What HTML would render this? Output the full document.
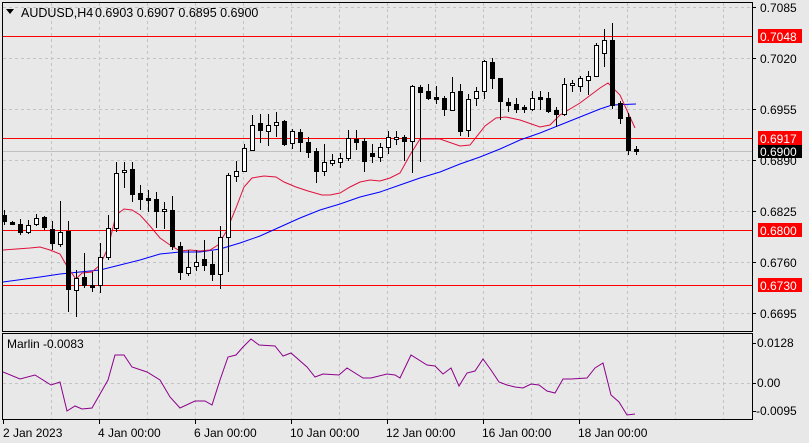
<!DOCTYPE html>
<html><head><meta charset="utf-8"><style>
html,body{margin:0;padding:0;background:#e8e8e8;width:809px;height:443px;overflow:hidden}
svg{display:block;font-family:"Liberation Sans",Tahoma,sans-serif}
</style></head><body>
<svg width="809" height="443" viewBox="0 0 809 443" xmlns="http://www.w3.org/2000/svg">
<rect width="809" height="443" fill="#e8e8e8"/>
<defs><clipPath id="m"><rect x="3" y="3" width="749" height="328"/></clipPath>
<clipPath id="i"><rect x="3" y="334" width="749" height="85"/></clipPath></defs>
<g stroke="#c4c4c4" stroke-dasharray="3,3" stroke-width="1">
<path d="M51.5 3V331M99.5 3V331M147.5 3V331M195.5 3V331M243.5 3V331M291.5 3V331M339.5 3V331M387.5 3V331M435.5 3V331M483.5 3V331M531.5 3V331M579.5 3V331M627.5 3V331M675.5 3V331M723.5 3V331"/>
<path d="M3 7.5H752M3 58.5H752M3 109.5H752M3 160.5H752M3 211.5H752M3 262.5H752M3 313.5H752"/>
<path d="M51.5 334V419M99.5 334V419M147.5 334V419M195.5 334V419M243.5 334V419M291.5 334V419M339.5 334V419M387.5 334V419M435.5 334V419M483.5 334V419M531.5 334V419M579.5 334V419M627.5 334V419M675.5 334V419M723.5 334V419"/>
<path d="M3 383.5H752"/>
</g>
<g clip-path="url(#m)">
<path d="M3 151.5H752" stroke="#c0c0c0"/>
<g stroke="#ff0000" stroke-width="1"><path d="M3 36.5H752M3 138.5H752M3 230.5H752M3 285.5H752"/></g>
<polyline fill="none" stroke="#0000ff" points="3,282 40,277 60,274 80,272 100,270 120,265 140,260 160,254 180,252 200,252 220,249 240,243 260,236 280,227 300,218 320,210 340,204 360,197 380,192 400,185 420,178 440,172 460,164 480,157 500,149 520,140 540,133 560,125 580,117 600,109 612,105 636,104"/>
<polyline fill="none" stroke="#e0103c" points="3,250 30,248 40,247 50,250 60,254 68,268 76,279 82,273 92,272 100,265 108,248 116,215 124,209 132,210 140,215 150,226 160,238 170,245 180,251 190,250 200,251 210,250 218,245 226,232 236,208 244,187 252,178 264,176 276,177 284,182 296,187 308,191 322,195 330,195 340,193 350,187 360,182 370,180 380,181 390,178 400,173 410,155 420,139 440,139 460,146 470,145 485,126 496,118 506,117 520,120 540,127 550,125 560,115 580,103 600,88 608,83 620,95 635,128"/>
<path stroke="#000" fill="none" d="M4.5 210V225M12.5 221V225M20.5 219V235M28.5 220V234M36.5 214V226M44.5 216V230M52.5 221V250M60.5 201V247M68.5 221V312M76.5 270V317M84.5 253V288M92.5 272V292M100.5 243V293M108.5 215V260M116.5 162V232M124.5 162V188M132.5 162V202M140.5 185V210M148.5 190V212M156.5 192V228M164.5 202V229M172.5 196V250M180.5 242V280M188.5 250V276M196.5 250V271M204.5 240V271M212.5 251V281M220.5 226V289M228.5 173V272M236.5 161V182M244.5 144V171M252.5 115V151M260.5 114V143M268.5 114V146M276.5 112V137M284.5 120V146M292.5 129V149M300.5 129V152M308.5 137V158M316.5 148V183M324.5 144V176M332.5 154V166M340.5 153V168M348.5 130V161M356.5 130V150M364.5 138V172M372.5 144V163M380.5 143V162M388.5 131V154M396.5 131V145M404.5 135V161M412.5 85V173M420.5 85V162M428.5 84V100M436.5 86V104M444.5 96V116M452.5 77V111M460.5 84V136M468.5 94V137M476.5 87V106M484.5 60V99M492.5 58V89M500.5 78V120M508.5 98V112M516.5 98V113M524.5 105V113M532.5 91V111M540.5 91V110M548.5 92V113M556.5 107V127M564.5 78V116M572.5 80V92M580.5 76V92M588.5 71V95M596.5 43V77M604.5 29V67M612.5 23V109M620.5 101V124M628.5 113V155M636.5 146V155"/>
<g fill="#000" stroke="#000">
<rect x="2.5" y="215.5" width="4" height="6"/><rect x="10.5" y="222.5" width="4" height="2"/><rect x="18.5" y="224.5" width="4" height="8"/><rect x="42.5" y="217.5" width="4" height="10"/><rect x="50.5" y="229.5" width="4" height="14"/><rect x="66.5" y="231.5" width="4" height="58"/><rect x="82.5" y="277.5" width="4" height="8"/><rect x="90.5" y="285.5" width="4" height="2"/><rect x="130.5" y="169.5" width="4" height="25"/><rect x="138.5" y="193.5" width="4" height="6"/><rect x="146.5" y="198.5" width="4" height="2"/><rect x="154.5" y="199.5" width="4" height="12"/><rect x="170.5" y="210.5" width="4" height="36"/><rect x="178.5" y="246.5" width="4" height="26"/><rect x="202.5" y="259.5" width="4" height="6"/><rect x="210.5" y="264.5" width="4" height="10"/><rect x="258.5" y="123.5" width="4" height="7"/><rect x="282.5" y="121.5" width="4" height="23"/><rect x="298.5" y="132.5" width="4" height="10"/><rect x="306.5" y="142.5" width="4" height="10"/><rect x="314.5" y="151.5" width="4" height="20"/><rect x="354.5" y="139.5" width="4" height="3"/><rect x="362.5" y="141.5" width="4" height="20"/><rect x="370.5" y="153.5" width="4" height="3"/><rect x="402.5" y="137.5" width="4" height="4"/><rect x="418.5" y="87.5" width="4" height="5"/><rect x="426.5" y="91.5" width="4" height="7"/><rect x="434.5" y="97.5" width="4" height="2"/><rect x="442.5" y="98.5" width="4" height="11"/><rect x="458.5" y="91.5" width="4" height="40"/><rect x="490.5" y="62.5" width="4" height="16"/><rect x="498.5" y="78.5" width="4" height="23"/><rect x="506.5" y="102.5" width="4" height="3"/><rect x="514.5" y="104.5" width="4" height="5"/><rect x="522.5" y="107.5" width="4" height="2"/><rect x="538.5" y="97.5" width="4" height="2"/><rect x="546.5" y="98.5" width="4" height="13"/><rect x="554.5" y="110.5" width="4" height="4"/><rect x="610.5" y="40.5" width="4" height="65"/><rect x="618.5" y="103.5" width="4" height="15"/><rect x="626.5" y="117.5" width="4" height="33"/><rect x="634.5" y="149.5" width="4" height="2"/>
</g>
<g fill="#fff" stroke="#000">
<rect x="26.5" y="225.5" width="4" height="7"/><rect x="34.5" y="218.5" width="4" height="6"/><rect x="58.5" y="232.5" width="4" height="12"/><rect x="74.5" y="278.5" width="4" height="12"/><rect x="98.5" y="257.5" width="4" height="28"/><rect x="106.5" y="228.5" width="4" height="29"/><rect x="114.5" y="173.5" width="4" height="55"/><rect x="122.5" y="170.5" width="4" height="2"/><rect x="162.5" y="209.5" width="4" height="2"/><rect x="186.5" y="267.5" width="4" height="6"/><rect x="194.5" y="262.5" width="4" height="4"/><rect x="218.5" y="237.5" width="4" height="37"/><rect x="226.5" y="175.5" width="4" height="62"/><rect x="234.5" y="171.5" width="4" height="5"/><rect x="242.5" y="148.5" width="4" height="23"/><rect x="250.5" y="125.5" width="4" height="25"/><rect x="266.5" y="125.5" width="4" height="6"/><rect x="274.5" y="122.5" width="4" height="3"/><rect x="290.5" y="131.5" width="4" height="12"/><rect x="322.5" y="162.5" width="4" height="9"/><rect x="330.5" y="160.5" width="4" height="3"/><rect x="338.5" y="158.5" width="4" height="4"/><rect x="346.5" y="138.5" width="4" height="20"/><rect x="378.5" y="147.5" width="4" height="10"/><rect x="386.5" y="137.5" width="4" height="10"/><rect x="394.5" y="137.5" width="4" height="2"/><rect x="410.5" y="86.5" width="4" height="55"/><rect x="450.5" y="92.5" width="4" height="18"/><rect x="466.5" y="99.5" width="4" height="31"/><rect x="474.5" y="91.5" width="4" height="7"/><rect x="482.5" y="61.5" width="4" height="30"/><rect x="530.5" y="98.5" width="4" height="11"/><rect x="562.5" y="84.5" width="4" height="30"/><rect x="570.5" y="83.5" width="4" height="2"/><rect x="578.5" y="78.5" width="4" height="8"/><rect x="586.5" y="76.5" width="4" height="4"/><rect x="594.5" y="45.5" width="4" height="31"/><rect x="602.5" y="40.5" width="4" height="13"/>
</g>
</g>
<g clip-path="url(#i)">
<polyline fill="none" stroke="#8b008b" points="3,372 20,379 35,375 51,385 60,382 67,411 75,406 82,409 92,408 108,380 115,355 124,355 132,367 147,372 160,380 170,397 180,408 195,401 205,401 212,405 220,380 228,357 236,355 243,347 251,339 259,345 275,346 283,356 291,353 307,367 315,377 323,374 339,375 347,368 363,378 371,378 387,374 395,375 400,378 411,355 427,365 435,366 443,374 451,368 459,386 467,373 475,371 483,359 491,370 499,382 507,385 515,387 523,388 531,384 539,385 547,391 555,393 563,379 571,379 587,378 595,368 603,363 611,395 619,402 627,415 635,414"/>
</g>
<g fill="none" stroke="#000" stroke-width="1">
<rect x="2.5" y="2.5" width="750" height="329"/>
<rect x="2.5" y="333.5" width="750" height="86"/>
<path d="M752 7.5H756M752 58.5H756M752 109.5H756M752 160.5H756M752 211.5H756M752 262.5H756M752 313.5H756M752 343.5H756M752 383.5H756M752 411.5H756"/>
<path d="M3.5 420V424M99.5 420V424M195.5 420V424M291.5 420V424M387.5 420V424M483.5 420V424M579.5 420V424"/>
</g>
<path d="M6 9H14L10 14Z" fill="#000"/>
<text x="21" y="17" font-size="12.5" fill="#000">AUDUSD,H4</text>
<text x="95" y="17" font-size="12.5" fill="#000">0.6903 0.6907 0.6895 0.6900</text>
<text x="7" y="348" font-size="12" fill="#000">Marlin -0.0083</text>
<g font-size="12" fill="#000">
<text x="760" y="12">0.7085</text>
<text x="760" y="63">0.7020</text>
<text x="760" y="114">0.6955</text>
<text x="760" y="165">0.6890</text>
<text x="760" y="216">0.6825</text>
<text x="760" y="267">0.6760</text>
<text x="760" y="318">0.6695</text>
<text x="757" y="347">0.0128</text>
<text x="757" y="387">0.00</text>
<text x="756" y="415">-0.0095</text>
</g>
<rect x="758" y="29" width="44" height="14" fill="#ff0000"/>
<rect x="758" y="131" width="44" height="14" fill="#ff0000"/>
<rect x="758" y="145" width="44" height="13" fill="#000"/>
<rect x="758" y="223" width="44" height="14" fill="#ff0000"/>
<rect x="758" y="278" width="44" height="14" fill="#ff0000"/>
<g font-size="12" fill="#fff">
<text x="760" y="41">0.7048</text>
<text x="760" y="143">0.6917</text>
<text x="760" y="156">0.6900</text>
<text x="760" y="235">0.6800</text>
<text x="760" y="290">0.6730</text>
</g>
<g font-size="12" fill="#000">
<text x="3" y="437">2 Jan 2023</text>
<text x="98" y="437">4 Jan 00:00</text>
<text x="194" y="437">6 Jan 00:00</text>
<text x="290" y="437">10 Jan 00:00</text>
<text x="386" y="437">12 Jan 00:00</text>
<text x="482" y="437">16 Jan 00:00</text>
<text x="578" y="437">18 Jan 00:00</text>
</g>
</svg>
</body></html>
